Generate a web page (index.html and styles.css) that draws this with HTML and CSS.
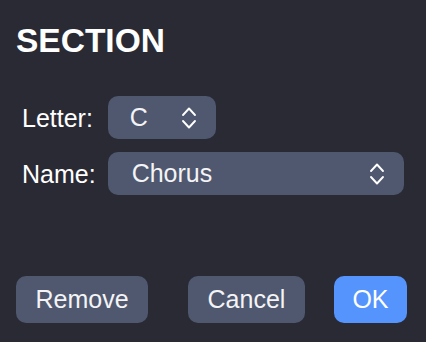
FILE: index.html
```html
<!DOCTYPE html>
<html lang="en">
<head>
<meta charset="utf-8">
<title>Section</title>
<link rel="stylesheet" href="styles.css">
</head>
<body>
<div class="dialog">
  <h1 class="title">SECTION</h1>
  <div class="form">
    <label class="label">Letter:</label>
    <div class="select select-short">
      <span class="value">C</span>
      <svg class="chev" width="16" height="24" viewBox="0 0 16 24"><path d="M2 9 L8 2.5 L14 9 M2 15 L8 21.5 L14 15" fill="none" stroke="#ffffff" stroke-width="1.9" stroke-linecap="round" stroke-linejoin="round"/></svg>
    </div>
    <label class="label">Name:</label>
    <div class="select">
      <span class="value">Chorus</span>
      <svg class="chev" width="16" height="24" viewBox="0 0 16 24"><path d="M2 9 L8 2.5 L14 9 M2 15 L8 21.5 L14 15" fill="none" stroke="#ffffff" stroke-width="1.9" stroke-linecap="round" stroke-linejoin="round"/></svg>
    </div>
  </div>
  <div class="actions">
    <button class="btn">Remove</button>
    <button class="btn btn-cancel">Cancel</button>
    <button class="btn btn-primary">OK</button>
  </div>
</div>
</body>
</html>
```
FILE: styles.css
```css
html, body {
  margin: 0;
  padding: 0;
}
body {
  width: 426px;
  height: 342px;
  background: #2a2a34;
  font-family: "Liberation Sans", Arial, Helvetica, sans-serif;
  color: #ffffff;
  overflow: hidden;
}
.dialog {
  box-sizing: border-box;
  height: 342px;
  padding: 21px 19px 19px 16px;
  display: flex;
  flex-direction: column;
}
.title {
  margin: 0;
  font-size: 33.5px;
  line-height: 40px;
  font-weight: 700;
}
.form {
  margin-top: 35px;
  padding: 0 3px 0 6px;
  display: grid;
  grid-template-columns: auto 1fr;
  column-gap: 12px;
  row-gap: 13px;
  align-items: center;
}
.label {
  font-size: 25px;
  line-height: 30px;
  color: #ffffff;
}
.select {
  box-sizing: border-box;
  height: 43px;
  border-radius: 10px;
  background: #4f586f;
  display: flex;
  align-items: center;
  justify-content: space-between;
  padding: 0 19px 0 24px;
  font-size: 25px;
  color: #f4f4f6;
}
.select-short {
  width: 108px;
  padding-left: 22px;
}
.chev {
  display: block;
  flex: none;
}
.actions {
  margin-top: auto;
  display: flex;
  align-items: center;
  gap: 29px;
}
.btn {
  box-sizing: border-box;
  height: 47px;
  padding: 0 19.5px;
  border: none;
  border-radius: 10px;
  background: #4f586f;
  color: #f4f4f6;
  font-family: "Liberation Sans", Arial, Helvetica, sans-serif;
  font-size: 25px;
  line-height: 47px;
}
.btn-cancel {
  margin-left: auto;
}
.btn-primary {
  background: #5494fc;
  padding: 0 18.5px;
  color: #ffffff;
}
```
